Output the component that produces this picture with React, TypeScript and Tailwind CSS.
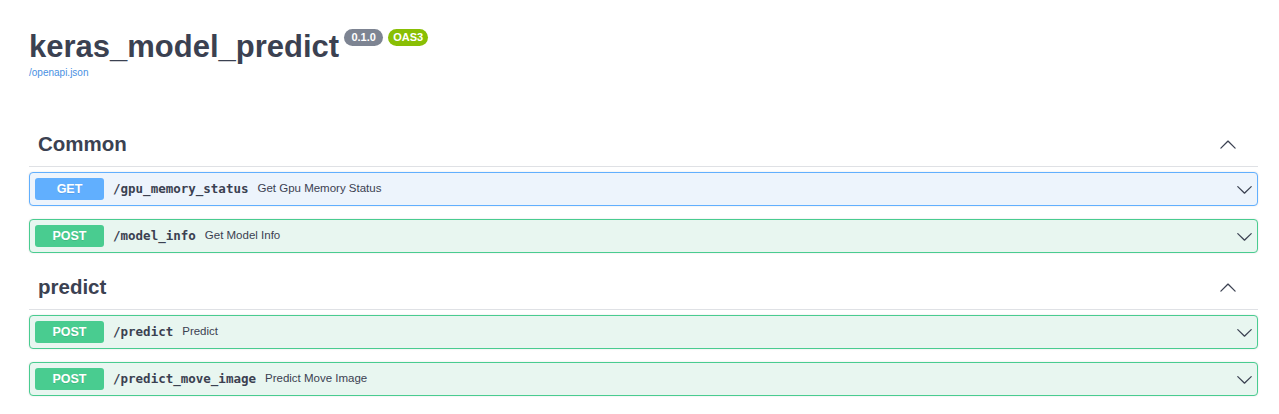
import type { ReactNode } from "react"

type Op = {
  method: "GET" | "POST"
  path: string
  summary: string
}

type Tag = {
  name: string
  ops: Op[]
}

const tags: Tag[] = [
  {
    name: "Common",
    ops: [
      { method: "GET", path: "/gpu_memory_status", summary: "Get Gpu Memory Status" },
      { method: "POST", path: "/model_info", summary: "Get Model Info" },
    ],
  },
  {
    name: "predict",
    ops: [
      { method: "POST", path: "/predict", summary: "Predict" },
      { method: "POST", path: "/predict_move_image", summary: "Predict Move Image" },
    ],
  },
]

const sans = "font-['Liberation_Sans',Arial,sans-serif]"

function Chevron({ up, size }: { up?: boolean; size: number }) {
  return (
    <svg
      width={size}
      height={size}
      viewBox="0 0 20 20"
      className={up ? "rotate-180" : ""}
      fill="#3b4151"
    >
      <path d="M17.418 6.109c.272-.268.709-.268.979 0s.271.701 0 .969l-7.908 7.83c-.27.268-.707.268-.979 0l-7.908-7.83c-.27-.268-.27-.701 0-.969.271-.268.709-.268.979 0L10 13.25l7.418-7.141z" />
    </svg>
  )
}

function Badge({ className, children }: { className: string; children: ReactNode }) {
  return (
    <span
      className={`flex h-[17px] items-center justify-center rounded-full text-[11px] font-bold text-white ${className}`}
    >
      {children}
    </span>
  )
}

function OpRow({ op }: { op: Op }) {
  const isGet = op.method === "GET"
  return (
    <div
      className={`flex h-[34px] items-center rounded-[4px] border px-[5px] shadow-[0_0_2px_rgba(0,0,0,0.12)] ${
        isGet ? "border-[#61affe] bg-[#edf4fc]" : "border-[#49cc90] bg-[#e8f6f0]"
      }`}
    >
      <span
        className={`flex h-[22px] w-[69px] items-center justify-center rounded-[3px] text-[12.5px] font-bold text-white [text-shadow:0_1px_0_rgba(0,0,0,0.1)] ${
          isGet ? "bg-[#61affe]" : "bg-[#49cc90]"
        }`}
      >
        {op.method}
      </span>
      <span className="ml-[9px] font-['DejaVu_Sans_Mono',monospace] text-[12.5px] font-bold text-[#3b4151]">
        {op.path}
      </span>
      <span className="ml-[9px] text-[11.5px] text-[#3b4151]">{op.summary}</span>
      <span className="ml-auto mr-[-1px] flex">
        <Chevron size={17} />
      </span>
    </div>
  )
}

function TagSection({ tag }: { tag: Tag }) {
  return (
    <section className="mt-[13px] first:mt-0">
      <div className="flex h-[44px] items-center border-b border-[#dfe1e5] pl-[9px] pr-[21px]">
        <h3 className="text-[20.5px] font-bold text-[#3b4151]">{tag.name}</h3>
        <span className="ml-auto flex">
          <Chevron up size={18} />
        </span>
      </div>
      <div className="mt-[5px] flex flex-col gap-[13px]">
        {tag.ops.map((op) => (
          <OpRow key={op.path} op={op} />
        ))}
      </div>
    </section>
  )
}

export default function App() {
  return (
    <div className={`min-h-[414px] bg-white pl-[29px] pr-[21px] pt-[31px] ${sans}`}>
      <div className="flex items-start">
        <h1 className="text-[31px] leading-[31px] font-bold text-[#3b4151]">keras_model_predict</h1>
        <div className="ml-[5px] mt-[-2px] flex gap-[5px]">
          <Badge className="w-[39px] bg-[#7d8492]">0.1.0</Badge>
          <Badge className="w-[40px] bg-[#89bf04]">OAS3</Badge>
        </div>
      </div>
      <a className="mt-[5px] block text-[10px] leading-[12px] text-[#4990e2]">/openapi.json</a>
      <div className="mt-[44px]">
        {tags.map((tag) => (
          <TagSection key={tag.name} tag={tag} />
        ))}
      </div>
    </div>
  )
}
